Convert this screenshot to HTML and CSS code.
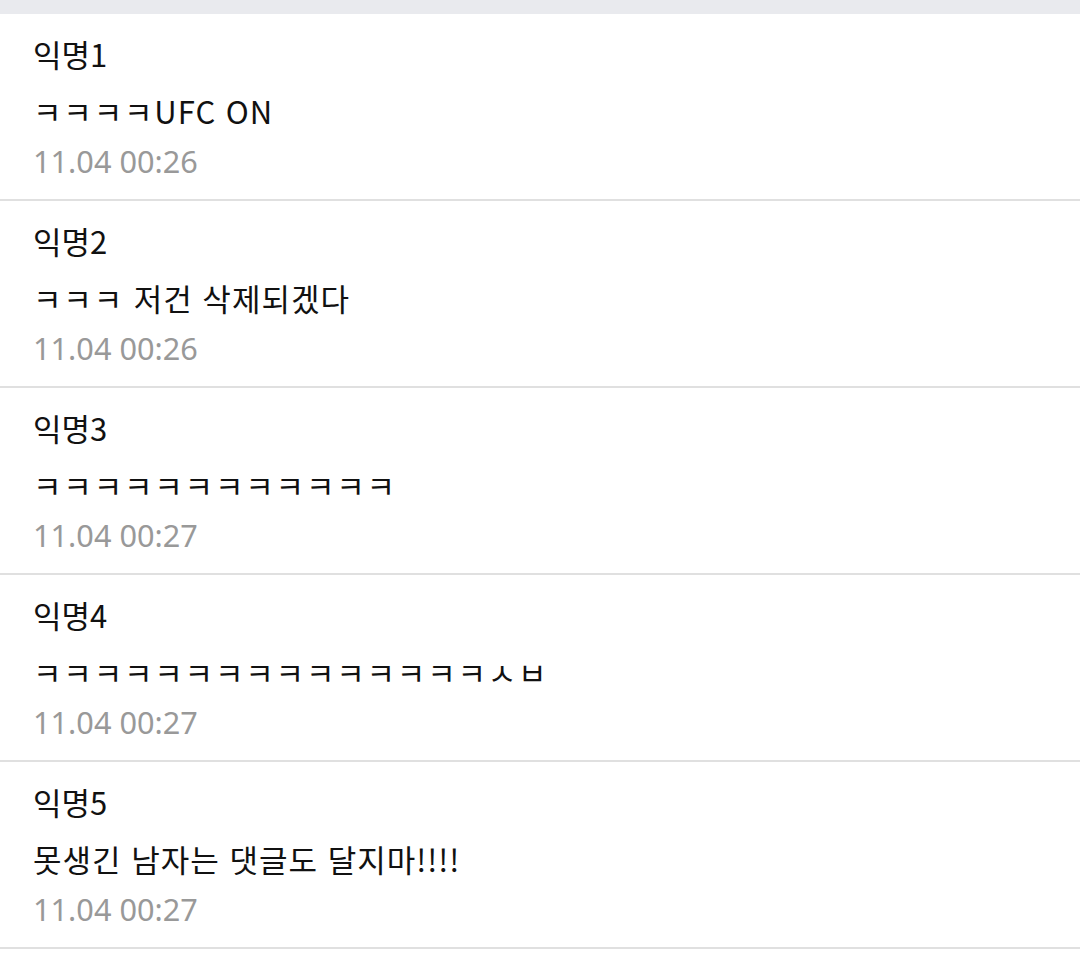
FILE: index.html
```html
<!DOCTYPE html>
<html lang="ko">
<head>
<meta charset="utf-8">
<link rel="stylesheet" href="styles.css">
</head>
<body>
<div class="topbar"></div>
<ul class="comments">
  <li class="comment">
    <div class="name">익명1</div>
    <div class="text"><span class="jamo">ㅋㅋㅋㅋ</span>UFC ON</div>
    <div class="date">11.04 00:26</div>
  </li>
  <li class="comment">
    <div class="name">익명2</div>
    <div class="text"><span class="jamo">ㅋㅋㅋ</span> 저건 삭제되겠다</div>
    <div class="date">11.04 00:26</div>
  </li>
  <li class="comment">
    <div class="name">익명3</div>
    <div class="text"><span class="jamo">ㅋㅋㅋㅋㅋㅋㅋㅋㅋㅋㅋㅋ</span></div>
    <div class="date">11.04 00:27</div>
  </li>
  <li class="comment">
    <div class="name">익명4</div>
    <div class="text"><span class="jamo">ㅋㅋㅋㅋㅋㅋㅋㅋㅋㅋㅋㅋㅋㅋㅋㅅㅂ</span></div>
    <div class="date">11.04 00:27</div>
  </li>
  <li class="comment">
    <div class="name">익명5</div>
    <div class="text">못생긴 남자는 댓글도 달지마!!!!</div>
    <div class="date">11.04 00:27</div>
  </li>
</ul>
</body>
</html>
```
FILE: styles.css
```css
html, body {
  margin: 0;
  padding: 0;
  background: #ffffff;
}
body {
  font-family: "Noto Sans CJK KR", "Noto Sans", sans-serif;
  color: #111111;
  width: 1080px;
  height: 962px;
  overflow: hidden;
}
.topbar {
  height: 14px;
  background: #e9eaee;
}
.comments {
  list-style: none;
  margin: 0;
  padding: 0;
}
.comment {
  border-bottom: 2px solid #e0e0e0;
  padding: 16px 33px 0;
  height: 169px;
}
.name {
  font-size: 31px;
  line-height: 48px;
  margin-bottom: 9px;
}
.text {
  font-size: 31px;
  line-height: 48px;
  letter-spacing: 1px;
}
.jamo {
  letter-spacing: 1.8px;
}
.date {
  font-family: "Noto Sans", "Noto Sans CJK KR", sans-serif;
  font-size: 30.7px;
  line-height: 48px;
  margin-top: 2px;
  color: #999999;
}
```
